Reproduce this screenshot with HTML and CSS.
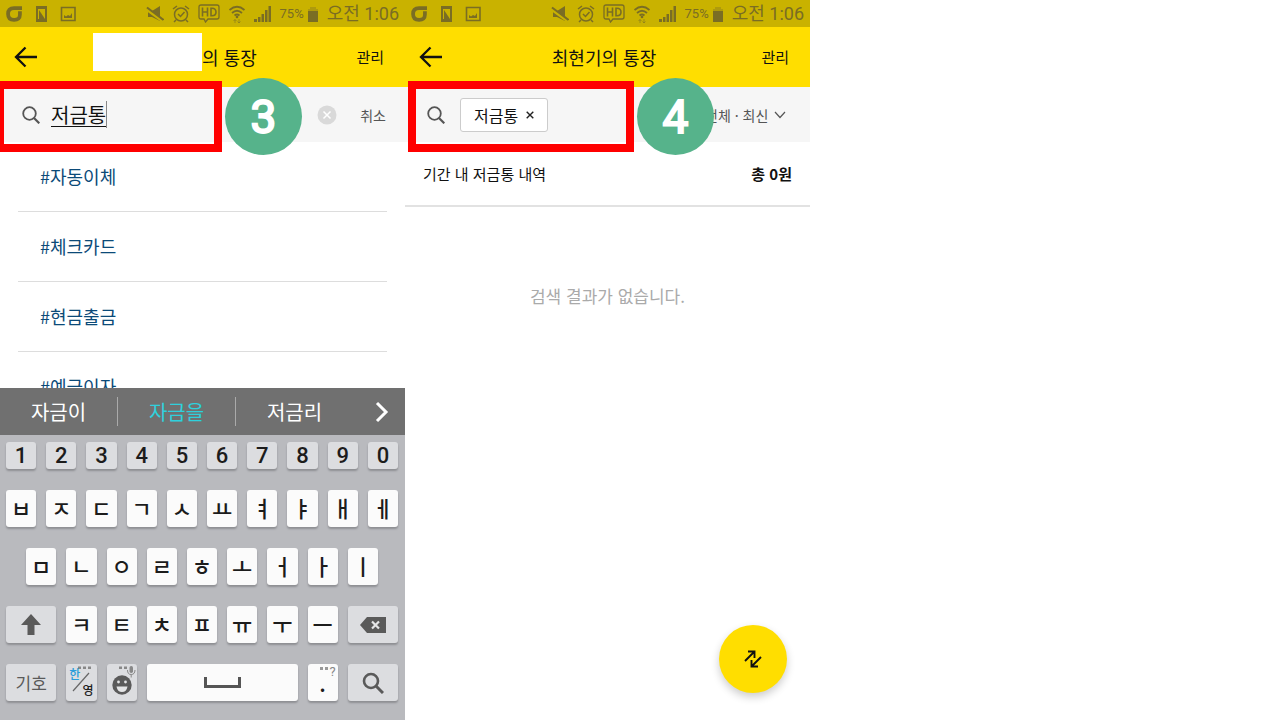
FILE: index.html
```html
<!DOCTYPE html>
<html lang="ko">
<head>
<meta charset="utf-8">
<meta name="viewport" content="width=device-width, initial-scale=1">
<title>통장 검색</title>
<link rel="stylesheet" href="styles.css">
</head>
<body>
<svg class="sprite" aria-hidden="true">
  <symbol id="logo" viewBox="0 0 17 17"><path d="M17 2.300H8.500Q2.200 2.300 2.200 8.500T8.500 14.800T14.800 9V5.500" fill="none" stroke="currentColor" stroke-width="4"/></symbol>
  <symbol id="card" viewBox="0 0 16 16"><path d="M3 0h11v16H3zM5 3v10h7V3z" fill="currentColor" fill-rule="evenodd"/><path d="M6 4l6 9H6z" fill="currentColor"/></symbol>
  <symbol id="photo" viewBox="0 0 16 16"><path d="M1.500 1.500h13.500v13H1.500z" fill="none" stroke="currentColor" stroke-width="1.600"/><path d="M4 12V9l2 1.500L8 9l2 1 2-3v5z" fill="currentColor"/></symbol>
  <symbol id="mute" viewBox="0 0 18 18"><path d="M2 6h4l8-5v15L6 12H2z" fill="currentColor"/><path d="M0 4l18 13" stroke="#c9b200" stroke-width="3"/><path d="M1 2.500l16.500 12.500" stroke="currentColor" stroke-width="2"/></symbol>
  <symbol id="alarm" viewBox="0 0 18 18"><circle cx="9" cy="9.500" r="6.500" fill="none" stroke="currentColor" stroke-width="1.500"/><path d="M6 9l2.500 2.500L12.500 7M1 4l4-3M17 4l-4-3M4 15l-2 2M14 15l2 2" fill="none" stroke="currentColor" stroke-width="1.500"/></symbol>
  <symbol id="hd" viewBox="0 0 22 19"><path d="M3 1h16q2 0 2 2v10q0 2-2 2h-9l-2.500 3L6 15H3q-2 0-2-2V3q0-2 2-2z" fill="none" stroke="currentColor" stroke-width="1.300"/><path d="M4.500 3.500v9M9.500 3.500v9M4.500 8h5M13 4.300v7.400h1q4 0 4-3.700t-4-3.700z" fill="none" stroke="currentColor" stroke-width="1.600"/></symbol>
  <symbol id="wifi" viewBox="0 0 18 20"><path d="M1.500 6q7.500-6.500 15 0M4 9q5-4.500 10 0M6.500 11.500q2.500-2 5 0" fill="none" stroke="currentColor" stroke-width="1.700"/><circle cx="9" cy="13" r="1.300" fill="currentColor"/><path d="M7 19v-3.500M5.500 17L7 15.500 8.500 17M11 15v4M9.500 17.500L11 19l1.500-1.500" fill="none" stroke="currentColor" opacity=".55"/></symbol>
  <symbol id="signal" viewBox="0 0 18 18"><path d="M0 17v-3h3v3zM4 17v-5h2.500v5zM7.500 17V9H10v8zM11 17V5h2.500v12zM14.500 17V1H17v16z" fill="currentColor"/></symbol>
  <symbol id="battery" viewBox="0 0 12 16"><path d="M3 1h6v2h2v13H1V3h2z" fill="currentColor" opacity=".35"/><path d="M1 5h10v11H1z" fill="currentColor"/></symbol>
  <symbol id="back" viewBox="0 0 24 22"><path d="M23 11H2M11.500 1.500L2 11l9.500 9.500" fill="none" stroke="currentColor" stroke-width="2.300"/></symbol>
  <symbol id="search" viewBox="0 0 18 18"><circle cx="7.500" cy="7.500" r="6.300" fill="none" stroke="currentColor" stroke-width="1.800"/><path d="M12 12l5.300 5.300" stroke="currentColor" stroke-width="2.200"/></symbol>
</svg>

<main class="screens">
  <section class="phone">
    <div class="status">
      <svg class="i16"><use href="#logo"/></svg>
      <svg class="i16"><use href="#card"/></svg>
      <svg class="i16"><use href="#photo"/></svg>
      <div class="status-right">
        <svg class="i18"><use href="#mute"/></svg>
        <svg class="i18"><use href="#alarm"/></svg>
        <svg class="i22"><use href="#hd"/></svg>
        <svg class="i18 tall"><use href="#wifi"/></svg>
        <svg class="i18"><use href="#signal"/></svg>
        <span class="charge">75%<svg class="i12"><use href="#battery"/></svg></span>
        <span class="clock">오전 1:06</span>
      </div>
    </div>
    <header class="appbar masked">
      <button class="back" aria-label="뒤로"><svg><use href="#back"/></svg></button>
      <h1 class="title"><span class="mask"></span>의 통장</h1>
      <button class="manage">관리</button>
    </header>
    <div class="searchbar">
      <svg class="search-icon"><use href="#search"/></svg>
      <input class="query" type="text" value="저금통" aria-label="검색어" size="5"><span class="caret"></span>
      <button class="clear" aria-label="지우기"><svg viewBox="0 0 20 20"><circle cx="10" cy="10" r="9.500" fill="#d9d9d9"/><path d="M6.500 6.500l7 7m0-7l-7 7" stroke="#fff" stroke-width="1.500"/></svg></button>
      <button class="cancel">취소</button>
      <div class="frame frame-first"></div>
      <div class="step step-first">3</div>
    </div>
    <ul class="tags">
      <li><a href="#a">#자동이체</a></li>
      <li><a href="#b">#체크카드</a></li>
      <li><a href="#c">#현금출금</a></li>
      <li><a href="#d">#예금이자</a></li>
    </ul>
    <div class="keyboard">
      <div class="suggest">
        <button>자금이</button>
        <button class="active">자금을</button>
        <button>저금리</button>
        <button class="more" aria-label="더보기"><svg viewBox="0 0 14 22"><path d="M2 2l9 9-9 9" fill="none" stroke="#fff" stroke-width="3"/></svg></button>
      </div>
      <div class="keys">
        <div class="row digits"><button>1</button><button>2</button><button>3</button><button>4</button><button>5</button><button>6</button><button>7</button><button>8</button><button>9</button><button>0</button></div>
        <div class="row"><button>ㅂ</button><button>ㅈ</button><button>ㄷ</button><button>ㄱ</button><button>ㅅ</button><button>ㅛ</button><button>ㅕ</button><button>ㅑ</button><button>ㅐ</button><button>ㅔ</button></div>
        <div class="row inset"><button>ㅁ</button><button>ㄴ</button><button>ㅇ</button><button>ㄹ</button><button>ㅎ</button><button>ㅗ</button><button>ㅓ</button><button>ㅏ</button><button>ㅣ</button></div>
        <div class="row">
          <button class="wide gray" aria-label="시프트"><svg width="20" height="22" viewBox="0 0 20 22"><path d="M10 0l10 11h-6.500v10h-7V11H0z" fill="currentColor"/></svg></button>
          <button>ㅋ</button><button>ㅌ</button><button>ㅊ</button><button>ㅍ</button><button>ㅠ</button><button>ㅜ</button><button>ㅡ</button>
          <button class="wide gray" aria-label="삭제"><svg width="26" height="16" viewBox="0 0 26 16"><path d="M7 0h19v16H7L0 8z" fill="currentColor"/><path d="M12 4.500l7 7m0-7l-7 7" stroke="#e4e5e6" stroke-width="2.200"/></svg></button>
        </div>
        <div class="row">
          <button class="wide gray label">기호</button>
          <button class="gray lang" aria-label="한영 전환"><span class="han">한</span><svg width="30" height="37" viewBox="0 0 30 37"><path d="M7 27L23 9" stroke="#666" stroke-width="1.200"/><path d="M12 2.500h3v2.500h-3zM17 2.500h3v2.500h-3zM22 2.500h3v2.500h-3z" fill="#888"/></svg><span class="eng">영</span></button>
          <button class="gray full" aria-label="이모티콘"><svg width="30" height="37" viewBox="0 0 30 37"><circle cx="15" cy="21" r="9.700" fill="currentColor"/><path d="M9.500 22.500h11q-1 5.500-5.500 5.500t-5.500-5.500z" fill="#e4e5e6"/><circle cx="11.500" cy="18" r="1.400" fill="#e4e5e6"/><circle cx="18.500" cy="18" r="1.400" fill="#e4e5e6"/><path d="M12 2.500h3v2.500h-3zM17 2.500h3v2.500h-3z" fill="#888"/><rect x="22.500" y="2" width="3.500" height="7" rx="1.700" fill="#888"/><path d="M20.500 6q0 4.500 3.700 4.500T28 6m-3.800 4.500v3" fill="none" stroke="#888"/></svg></button>
          <button class="space" aria-label="스페이스"><svg width="37" height="12" viewBox="0 0 37 12"><path d="M1.500 0v9.500h34V0" fill="none" stroke="#555" stroke-width="3"/></svg></button>
          <button class="dot"><span class="hint"><svg width="8" height="3" viewBox="0 0 8 3"><path d="M0 0h3v3H0zM5 0h3v3H5z" fill="#999"/></svg>?</span><span class="period">.</span></button>
          <button class="wide gray" aria-label="검색"><svg width="22" height="22" viewBox="0 0 22 22"><circle cx="9" cy="9" r="7" fill="none" stroke="currentColor" stroke-width="2.600"/><path d="M14 14l7 7" stroke="currentColor" stroke-width="3"/></svg></button>
        </div>
      </div>
    </div>
  </section>

  <section class="phone">
    <div class="status">
      <svg class="i16"><use href="#logo"/></svg>
      <svg class="i16"><use href="#card"/></svg>
      <svg class="i16"><use href="#photo"/></svg>
      <div class="status-right">
        <svg class="i18"><use href="#mute"/></svg>
        <svg class="i18"><use href="#alarm"/></svg>
        <svg class="i22"><use href="#hd"/></svg>
        <svg class="i18 tall"><use href="#wifi"/></svg>
        <svg class="i18"><use href="#signal"/></svg>
        <span class="charge">75%<svg class="i12"><use href="#battery"/></svg></span>
        <span class="clock">오전 1:06</span>
      </div>
    </div>
    <header class="appbar">
      <button class="back" aria-label="뒤로"><svg><use href="#back"/></svg></button>
      <h1 class="title">최현기의 통장</h1>
      <button class="manage">관리</button>
    </header>
    <div class="searchbar">
      <svg class="search-icon"><use href="#search"/></svg>
      <button class="chip">저금통<svg viewBox="0 0 8 8"><path d="M.7.700l6.600 6.600m0-6.600L.7 7.300" stroke="#222" stroke-width="1.400"/></svg></button>
      <label class="filter">
        <select aria-label="조회 조건"><option>전체 · 최신</option></select>
        <svg viewBox="0 0 12 8"><path d="M1 1l5 5.500L11 1" fill="none" stroke="#555" stroke-width="1.200"/></svg>
      </label>
      <div class="frame frame-second"></div>
      <div class="step step-second">4</div>
    </div>
    <div class="summary"><span>기간 내 저금통 내역</span><strong>총 0원</strong></div>
    <p class="empty">검색 결과가 없습니다.</p>
    <button class="fab" aria-label="이체"><svg viewBox="0 0 18 18"><path d="M1 11L10 2M4 1.500h6.500V8M17 7L8 16m6 .500H7.500V10" fill="none" stroke="#111" stroke-width="1.900"/></svg></button>
  </section>
</main>
</body>
</html>
```

FILE: styles.css
```css
* { box-sizing: border-box; }
body {
  margin: 0;
  background: #fff;
  color: #111;
  font-family: "Noto Sans CJK KR", "Noto Sans", sans-serif;
  font-size: 16px;
  line-height: 24px;
}
button, input, select {
  margin: 0;
  padding: 0;
  border: 0;
  background: none;
  color: inherit;
  font: inherit;
}
svg { display: block; flex: none; }
.sprite { position: absolute; width: 0; height: 0; }

.screens {
  display: grid;
  grid-template-columns: 405fr 405fr 470fr;
  height: 100vh;
}
.phone {
  position: relative;
  display: flex;
  flex-direction: column;
  min-width: 0;
  min-height: 0;
}

/* Status bar */
.status {
  display: flex;
  flex: none;
  align-items: center;
  gap: 11px;
  height: 27px;
  padding: 0 6px;
  background: #c9b200;
  color: #7a6d24;
}
.status-right {
  display: flex;
  align-items: center;
  gap: 8px;
  margin-left: auto;
}
.i12 { width: 12px; height: 16px; }
.i16 { width: 16px; height: 16px; }
.i18 { width: 18px; height: 18px; }
.i22 { width: 22px; height: 19px; }
.tall { height: 20px; }
.charge {
  display: flex;
  align-items: center;
  gap: 3px;
  font-family: Roboto, sans-serif;
  font-size: 13px;
}
.clock {
  font-family: Roboto, "Noto Sans CJK KR", sans-serif;
  font-size: 18px;
  white-space: nowrap;
}

/* App bar */
.appbar {
  display: grid;
  grid-template-columns: 1fr auto 1fr;
  flex: none;
  align-items: center;
  height: 60px;
  padding: 0 21px 0 14px;
  background: #ffde00;
}
.masked { grid-template-columns: 79px auto 1fr; }
.back { justify-self: start; }
.back svg { width: 24px; height: 22px; }
.title {
  display: flex;
  align-items: center;
  margin: 0;
  font-size: 18px;
  font-weight: 400;
  white-space: pre;
}
.mask {
  width: 109px;
  height: 38px;
  margin-bottom: 10px;
  background: #fff;
}
.manage { justify-self: end; font-size: 15px; }

/* Search bar */
.searchbar {
  position: relative;
  display: flex;
  flex: none;
  align-items: center;
  height: 55px;
  padding: 0 19px 0 22px;
  background: #f6f6f6;
  color: #555;
}
.search-icon { width: 18px; height: 18px; }
.query {
  field-sizing: content;
  margin-left: 11px;
  color: #111;
  font-size: 20px;
  text-decoration: underline;
  text-underline-offset: 3px;
  outline: 0;
}
.caret { width: 1px; height: 27px; background: #888; }
.clear { margin-left: auto; }
.clear svg { width: 20px; height: 20px; }
.cancel { margin-left: 23px; font-size: 14px; }
.chip {
  display: flex;
  align-items: center;
  gap: 8px;
  height: 34px;
  margin-left: 15px;
  padding: 0 13px;
  border: 1px solid #ccc;
  border-radius: 3px;
  background: #fff;
  color: #111;
}
.chip svg { width: 8px; height: 8px; }
.filter {
  display: flex;
  align-items: center;
  gap: 3px;
  margin-left: auto;
  padding-right: 5px;
}
.filter select { appearance: none; font-size: 14px; }
.filter svg { width: 12px; height: 8px; }

/* Step annotations */
.frame {
  position: absolute;
  top: -6px;
  width: 226px;
  height: 71px;
  border: 8px solid #f00;
  pointer-events: none;
}
.frame-first { left: -4px; }
.frame-second { left: 3px; }
.step {
  position: absolute;
  top: -9px;
  z-index: 1;
  width: 77px;
  height: 77px;
  border-radius: 50%;
  background: #56b38b;
  color: #fff;
  font-family: Roboto, sans-serif;
  font-size: 46px;
  font-weight: 400;
  line-height: 79px;
  text-align: center;
  -webkit-text-stroke: 2px #fff;
  stroke-linejoin: round;
}
.step-first { left: 225px; }
.step-second { left: 232px; }

/* Tag list */
.tags {
  flex: 1;
  min-height: 0;
  margin: 0;
  padding: 0 18px;
  overflow: hidden;
  list-style: none;
}
.tags li {
  display: flex;
  align-items: center;
  height: 70px;
  padding: 0 22px 2px;
  border-bottom: 1px solid #ddd;
}
.tags a { color: #0b4a78; font-size: 18px; text-decoration: none; }

/* Keyboard */
.keyboard { flex: none; background: #b9babe; }
.suggest {
  display: grid;
  grid-template-columns: 118fr 118fr 117fr 52fr;
  align-items: center;
  height: 47px;
  background: #707070;
  color: #fff;
  font-size: 20px;
}
.suggest button { height: 29px; }
.suggest button:nth-child(-n+2) { border-right: 1px solid #aaa; }
.suggest .active { color: #2fd0dc; }
.suggest .more { display: grid; place-items: center; padding-left: 5px; }
.more svg { width: 14px; height: 22px; }
.keys {
  display: grid;
  gap: 21px;
  padding: 7px 2px 19px 1px;
}
.row {
  display: grid;
  grid-template-columns: repeat(20, 1fr);
  height: 37px;
}
.row button {
  position: relative;
  display: grid;
  grid-column: span 2;
  place-items: center;
  min-width: 0;
  margin: 0 5px;
  padding-bottom: 4px;
  border-radius: 3px;
  background: #fbfbfb;
  box-shadow: 0 2px 2px #8e8f93;
  color: #1c1c1c;
  font-size: 22px;
  font-weight: 500;
}
.row.digits { height: 27px; }
.row.digits button {
  padding: 1px 0 0;
  background: #dcdde0;
  font-family: Roboto, sans-serif;
  font-size: 22px;
  font-weight: 500;
}
.row.inset button:first-child { grid-column: 2 / span 2; }
.row .wide { grid-column: span 3; padding: 0; }
.row .space { grid-column: span 8; padding: 0; }
.row .gray { background: #dcdde0; color: #5a5a5a; }
.row .lang, .row .full { padding: 0; }
.row .label { font-size: 17px; font-weight: 400; }
.row .dot { align-items: end; padding-bottom: 13px; }
.period { line-height: 12px; }
.hint {
  position: absolute;
  top: 1px;
  right: 2px;
  display: flex;
  gap: 2px;
  color: #888;
  font-family: Roboto, sans-serif;
  font-size: 13px;
  font-weight: 400;
  line-height: 14px;
}
.hint svg { margin-top: 2px; }
.han, .eng { position: absolute; font-size: 12px; line-height: 12px; }
.han { top: 4px; left: 3px; color: #2a9ddb; }
.eng { right: 3px; bottom: 5px; color: #222; }

/* Results */
.summary {
  display: flex;
  align-items: center;
  justify-content: space-between;
  height: 65px;
  padding: 0 18px;
  border-bottom: 2px solid #e2e2e2;
  font-size: 15px;
}
.empty {
  margin: 77px 0 0;
  color: #aaa;
  font-size: 17px;
  text-align: center;
}
.fab {
  position: absolute;
  right: 23px;
  bottom: 27px;
  display: grid;
  place-items: center;
  width: 68px;
  height: 68px;
  border-radius: 50%;
  background: #ffde00;
  box-shadow: 0 4px 8px rgba(0, 0, 0, .2);
}
.fab svg { width: 18px; height: 18px; }
```
